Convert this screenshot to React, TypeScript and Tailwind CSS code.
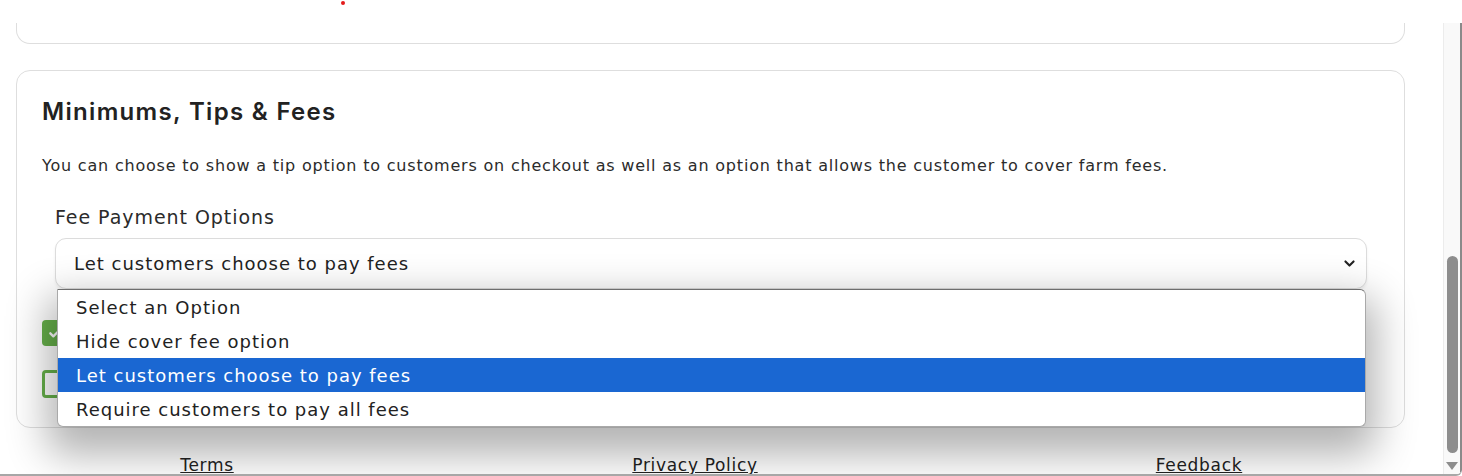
import * as React from "react";

const options = [
	"Select an Option",
	"Hide cover fee option",
	"Let customers choose to pay fees",
	"Require customers to pay all fees",
];

function CheckIcon() {
	return (
		<svg viewBox="0 0 24 24" className="h-4 w-4" fill="none">
			<path
				d="M5 12.5l4.5 4.5L19 7.5"
				stroke="white"
				strokeWidth="3.5"
				strokeLinecap="round"
				strokeLinejoin="round"
			/>
		</svg>
	);
}

function FeeSelect() {
	const selected = 2;

	return (
		<div className="relative">
			<div className="flex h-[51px] items-center justify-between rounded-[11px] border border-[#dcdcdc] bg-white pl-[18px] pr-[10px] text-[18px] tracking-[0.055em] text-[#222] shadow-[0_2px_3px_rgba(0,0,0,0.06)]">
				<span>{options[selected]}</span>
				<svg viewBox="0 0 16 16" className="h-[13px] w-[13px]" fill="none">
					<path
						d="M3 5.5l5 5 5-5"
						stroke="#222"
						strokeWidth="2.6"
						strokeLinecap="round"
						strokeLinejoin="round"
					/>
				</svg>
			</div>

			<div className="absolute left-[2px] right-[1px] top-full z-10 overflow-hidden rounded-b-[6px] rounded-tr-[6px] border border-[#a9a9a9] border-t-[#6e6e6e] bg-white shadow-[0_18px_40px_10px_rgba(0,0,0,0.3)]">
				{options.map((opt, index) => (
					<div
						key={opt}
						className={
							index === selected
								? "flex h-[34px] items-center bg-[#1a67d2] pl-[18px] text-[18px] tracking-[0.055em] text-white"
								: "flex h-[34px] items-center pl-[18px] text-[18px] tracking-[0.055em] text-[#222]"
						}
					>
						{opt}
					</div>
				))}
			</div>
		</div>
	);
}

export default function App() {
	return (
		<div className="flex h-[476px] w-[1462px] flex-col overflow-hidden rounded-br-[6px] border-b-2 border-[#a7a7a7] bg-white font-['DejaVu_Sans',sans-serif]">
			<div className="relative h-[23px] shrink-0 bg-white">
				<div className="absolute left-[341px] top-[1px] h-[4px] w-[4px] rounded-full bg-[#e31b1b]"></div>
			</div>

			<div className="flex min-h-0 flex-1">
				<div className="flex min-w-0 flex-1 flex-col px-[16px]">
					<div className="h-[21px] shrink-0 w-[1389px] rounded-b-[14px] border-x border-b border-[#dedede]"></div>

					<div className="mt-[26px] flex h-[358px] w-[1389px] shrink-0 flex-col rounded-[14px] border border-[#dedede] px-[25px] pt-[25px]">
						<h2 className="font-['Inter',sans-serif] text-[24px] font-semibold leading-[32px] tracking-[0.055em] text-[#222]">
							Minimums, Tips &amp; Fees
						</h2>
						<p className="mt-[26px] text-[16px] leading-[24px] tracking-[0.05em] text-[#2b2b2b]">
							You can choose to show a tip option to customers on checkout as well as an option that allows the customer to cover farm fees.
						</p>

						<div className="mt-[25px] pl-[13px] pr-[12px]">
							<div className="text-[19px] leading-[28px] tracking-[0.05em] text-[#2b2b2b]">
								Fee Payment Options
							</div>
							<div className="mt-[7px]">
								<FeeSelect />
							</div>
						</div>

						<div className="mt-[31px] flex flex-col gap-[24px]">
							<div className="flex h-[26px] w-[26px] items-center justify-center rounded-[4px] bg-[#66b04a]">
								<CheckIcon />
							</div>
							<div className="h-[28px] w-[26px] rounded-[4px] border-[3px] border-[#66b04a] bg-white"></div>
						</div>
					</div>

					<div className="mt-[25px] flex text-[17px] leading-[24px] tracking-[0.04em] text-[#222]">
						<div className="w-[382px] text-center">
							<a className="underline">Terms</a>
						</div>
						<div className="w-[594px] text-center">
							<a className="underline">Privacy Policy</a>
						</div>
						<div className="w-[414px] text-center">
							<a className="underline">Feedback</a>
						</div>
					</div>
				</div>

				<div className="flex w-[19px] shrink-0 flex-col items-center border-l border-r-2 border-[#ececec] border-r-[#8a8a8a] bg-[#f9f9f9]">
					<div className="mt-[233px] h-[197px] w-[11px] rounded-full bg-[#8d8d8d]"></div>
					<div className="mt-[9px] h-0 w-0 border-x-[6px] border-t-[8px] border-x-transparent border-t-[#8d8d8d]"></div>
				</div>
			</div>
		</div>
	);
}
